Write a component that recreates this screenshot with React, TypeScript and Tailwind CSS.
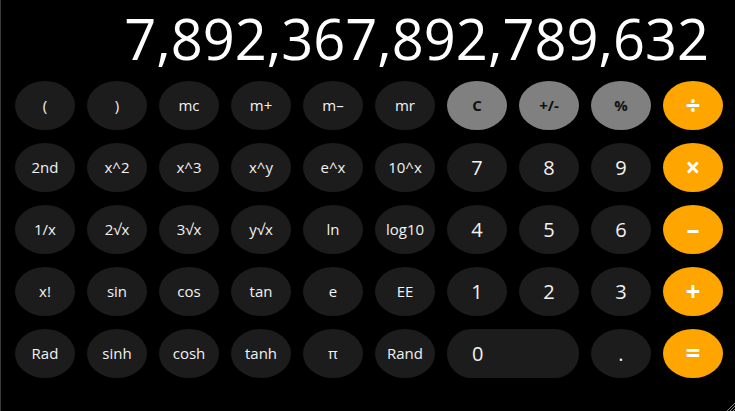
type Key = { label: string; kind: "fn" | "num" | "gray" | "op"; wide?: boolean }

const rows: Key[][] = [
  [
    { label: "(", kind: "fn" },
    { label: ")", kind: "fn" },
    { label: "mc", kind: "fn" },
    { label: "m+", kind: "fn" },
    { label: "m\u2013", kind: "fn" },
    { label: "mr", kind: "fn" },
    { label: "C", kind: "gray" },
    { label: "+/-", kind: "gray" },
    { label: "%", kind: "gray" },
    { label: "\u00f7", kind: "op" },
  ],
  [
    { label: "2nd", kind: "fn" },
    { label: "x^2", kind: "fn" },
    { label: "x^3", kind: "fn" },
    { label: "x^y", kind: "fn" },
    { label: "e^x", kind: "fn" },
    { label: "10^x", kind: "fn" },
    { label: "7", kind: "num" },
    { label: "8", kind: "num" },
    { label: "9", kind: "num" },
    { label: "\u00d7", kind: "op" },
  ],
  [
    { label: "1/x", kind: "fn" },
    { label: "2\u221ax", kind: "fn" },
    { label: "3\u221ax", kind: "fn" },
    { label: "y\u221ax", kind: "fn" },
    { label: "ln", kind: "fn" },
    { label: "log10", kind: "fn" },
    { label: "4", kind: "num" },
    { label: "5", kind: "num" },
    { label: "6", kind: "num" },
    { label: "\u2013", kind: "op" },
  ],
  [
    { label: "x!", kind: "fn" },
    { label: "sin", kind: "fn" },
    { label: "cos", kind: "fn" },
    { label: "tan", kind: "fn" },
    { label: "e", kind: "fn" },
    { label: "EE", kind: "fn" },
    { label: "1", kind: "num" },
    { label: "2", kind: "num" },
    { label: "3", kind: "num" },
    { label: "+", kind: "op" },
  ],
  [
    { label: "Rad", kind: "fn" },
    { label: "sinh", kind: "fn" },
    { label: "cosh", kind: "fn" },
    { label: "tanh", kind: "fn" },
    { label: "\u03c0", kind: "fn" },
    { label: "Rand", kind: "fn" },
    { label: "0", kind: "num", wide: true },
    { label: ".", kind: "num" },
    { label: "=", kind: "op" },
  ],
]

const styles = {
  fn: "bg-[#1c1c1c] text-[#f2f2f2] text-[15px] justify-center rounded-[50%]",
  num: "bg-[#1c1c1c] text-[#f2f2f2] text-[20px] justify-center rounded-[50%]",
  gray: "bg-[#808080] text-[#111] text-[15px] font-bold justify-center rounded-[50%]",
  op: "bg-[#ffa500] text-white text-[26px] font-bold justify-center rounded-[50%]",
}

function CalcKey({ k }: { k: Key }) {
  if (k.wide) {
    return (
      <button className="col-span-2 flex items-center pl-[25px] rounded-full bg-[#1c1c1c] text-[#f2f2f2] text-[20px]">
        {k.label}
      </button>
    )
  }
  return <button className={`flex items-center ${styles[k.kind]}`}>{k.label}</button>
}

export default function App() {
  return (
    <div
      className="relative h-[411px] w-[735px] bg-black border-l border-[#3a3a3a] overflow-hidden"
      style={{ fontFamily: '"Open Sans", "Noto Sans", sans-serif' }}
    >
      <div className="h-[81px] flex justify-end items-start pr-[26px] pt-[2px]">
        <span className="text-white text-[56px] leading-[72px]">7,892,367,892,789,632</span>
      </div>
      <div className="grid grid-cols-[repeat(10,60px)] auto-rows-[49px] gap-x-[12px] gap-y-[13px] pl-[14px]">
        {rows.flat().map((k, i) => (
          <CalcKey key={i} k={k} />
        ))}
      </div>
      <svg className="absolute right-0 bottom-0" width="10" height="10" viewBox="0 0 10 10">
        <line x1="2" y1="10" x2="10" y2="2" stroke="#888" strokeWidth="1" />
        <line x1="5" y1="10" x2="10" y2="5" stroke="#888" strokeWidth="1" />
        <line x1="8" y1="10" x2="10" y2="8" stroke="#888" strokeWidth="1" />
      </svg>
    </div>
  )
}
